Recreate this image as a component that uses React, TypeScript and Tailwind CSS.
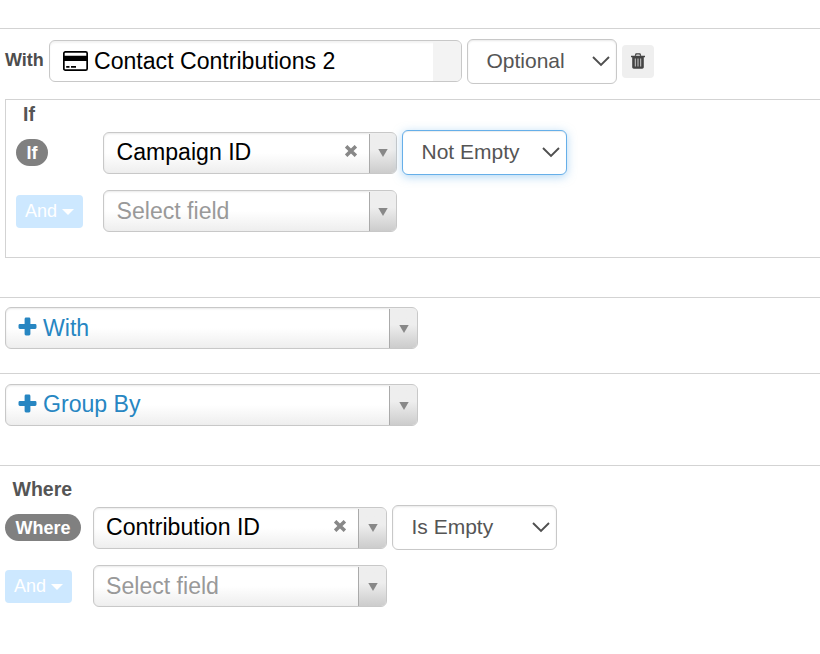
import React from "react";

function Plus() {
  return (
    <svg className="mb-[2px] mr-[6px] h-[19px] w-[19px] shrink-0" viewBox="0 0 19 19" fill="#2786c2">
      <path d="M8 0.5h3a1.4 1.4 0 0 1 1.4 1.4V7h4.7a1.4 1.4 0 0 1 1.4 1.4v2.2a1.4 1.4 0 0 1-1.4 1.4h-4.7v5.1a1.4 1.4 0 0 1-1.4 1.4H8a1.4 1.4 0 0 1-1.4-1.4V12H1.9a1.4 1.4 0 0 1-1.4-1.4V8.400a1.400 1.400 0 0 1 1.400-1.400H6.600V1.900A1.400 1.400 0 0 1 8 .5z" />
    </svg>
  );
}

function CreditCard() {
  return (
    <svg className="mr-[6px] h-[20px] w-[25px] shrink-0" viewBox="0 0 25 20" fill="none">
      <rect x="0.85" y="0.85" width="23.300" height="18.300" rx="1.500" stroke="#000" strokeWidth="1.700" />
      <path d="M1 4.800h23v5.200H1zM3.200 15h3.300v1.700H3.200zM8 15h5v1.700H8z" fill="#000" />
    </svg>
  );
}

function Clear() {
  return (
    <svg className="h-[12px] w-[12px] shrink-0" viewBox="0 0 12 12">
      <path d="M2.400 2.500l7.200 7M9.600 2.500l-7.200 7" stroke="#888" strokeWidth="3.600" strokeLinecap="square" />
    </svg>
  );
}

function Trash() {
  return (
    <svg className="mb-px h-[16px] w-[14px]" viewBox="0 0 14 16" fill="none">
      <path d="M4.300 2.800l.8-2h3.800l.8 2" stroke="#444" strokeWidth="1.300" />
      <path d="M0 2.800h14v1.500h-1.200V14c0 1-.7 1.700-1.600 1.700H2.800C1.900 15.700 1.200 15 1.200 14V4.300H0z" fill="#444" />
      <path d="M4.300 5.500v8M7 5.500v8M9.700 5.500v8" stroke="#dcdcdc" strokeWidth="0.900" />
    </svg>
  );
}

type ComboProps = {
  className: string;
  children: React.ReactNode;
  clearable?: boolean;
  arrowWidth?: string;
};

function Combo({ className, children, clearable, arrowWidth = "w-[28px]" }: ComboProps) {
  return (
    <div className={`flex h-[42px] shrink-0 overflow-hidden rounded-[6px] border border-[#c8c8c8] bg-linear-to-t from-[#eee] to-white to-50% text-[23.1px] leading-[40px] shadow-[inset_0_1px_2px_rgba(0,0,0,0.09)] ${className}`}>
      <div className="flex min-w-0 flex-1 items-center whitespace-nowrap pb-px">{children}</div>
      {clearable && <div className="mr-[12px] flex items-center pb-[4px]"><Clear /></div>}
      <div className={`mt-px flex shrink-0 items-center justify-center border-l border-[#aaa] bg-linear-to-t from-[#ccc] to-[#eee] to-60% ${arrowWidth}`}>
        <svg className="h-[8px] w-[10px]" viewBox="0 0 10 8"><path d="M.3 0h9.400L5 8z" fill="#888" /></svg>
      </div>
    </div>
  );
}

function Dropdown({ label, className, focused }: { label: string; className: string; focused?: boolean }) {
  return (
    <button className={`ml-[5px] flex h-[45px] shrink-0 items-center justify-between rounded-[6px] border bg-white pl-[18.500px] pr-[6px] text-[21px] leading-[30px] text-[#555] ${focused ? "border-[#66afe9] shadow-[inset_0_1px_1px_rgba(0,0,0,0.075),0_2px_10px_rgba(102,175,233,0.5)]" : "border-[#c8c8c8] shadow-[inset_0_1px_2px_rgba(0,0,0,0.09)]"} ${className}`}>
      <span className="whitespace-nowrap pb-[2px]">{label}</span>
      <svg className="h-[11px] w-[18px]" viewBox="0 0 18 11" fill="none"><path d="M1 1l8 8L17 1" stroke="#4f4f4f" strokeWidth="1.900" /></svg>
    </button>
  );
}

function AndButton() {
  return (
    <button className="flex h-[33px] w-[67px] shrink-0 items-center rounded-[4px] bg-[#cde8ff] pl-[9px] text-[18px] leading-[27px] text-white">
      And
      <svg className="ml-[5px] mt-px h-[6px] w-[12px]" viewBox="0 0 12 6"><path d="M0 0h12L6 6z" fill="#fff" /></svg>
    </button>
  );
}

function Badge({ children, className }: { children: string; className: string }) {
  return <span className={`flex h-[27px] shrink-0 items-center justify-center rounded-full bg-[#808080] pt-[2px] text-[18px] font-bold leading-[25px] text-white ${className}`}>{children}</span>;
}

export default function App() {
  return (
    <main className="h-[654px] w-[820px] overflow-hidden bg-white pt-[28px] font-['Liberation_Sans',Arial,sans-serif] text-[#555]">
      <section className="h-[269px] border-t border-[#d3d3d3] pl-[5px] pt-[10px]">
        <div className="flex h-[45px] items-center">
          <span className="w-[44px] shrink-0 pb-[2px] text-[18px] font-bold text-[#4d4d4d]">With</span>
          <div className="mb-px flex h-[42px] w-[413px] shrink-0 overflow-hidden rounded-[6px] border border-[#c8c8c8] text-[23.1px] leading-[40px] text-black shadow-[inset_0_2px_2px_rgba(0,0,0,0.05)]">
            <div className="flex flex-1 items-center whitespace-nowrap pl-[13px]"><CreditCard />Contact Contributions 2</div>
            <div className="mt-px w-[28px] bg-[#f3f3f3]" />
          </div>
          <Dropdown label="Optional" className="w-[150px]" />
          <button className="ml-[5px] flex h-[33px] w-[32px] items-center justify-center rounded-[4px] bg-[#efefef]"><Trash /></button>
        </div>
        <fieldset className="mt-[15px] h-[159px] border-y border-l border-[#d3d3d3] pl-[10px]">
          <h3 className="h-[30px] pl-[7px] text-[19.500px] font-bold leading-[28px]">If</h3>
          <div className="flex h-[45px] items-center">
            <Badge className="w-[32px]">If</Badge>
            <Combo className="ml-[55px] w-[294px] pl-[12.500px] text-black" arrowWidth="w-[27px]" clearable>Campaign ID</Combo>
            <Dropdown label="Not Empty" className="w-[165px]" focused />
          </div>
          <div className="mt-[15px] flex h-[42px] items-center">
            <AndButton />
            <Combo className="ml-[20px] w-[294px] pl-[12.500px] text-[#999]" arrowWidth="w-[27px]">Select field</Combo>
          </div>
        </fieldset>
      </section>
      <section className="h-[76px] border-t border-[#d3d3d3] pl-[5px] pt-[9px]">
        <Combo className="w-[413px] pl-[12px] text-[#2786c2]"><Plus />With</Combo>
      </section>
      <section className="h-[92px] border-t border-[#d3d3d3] pl-[5px] pt-[10px]">
        <Combo className="w-[413px] pl-[12px] leading-[38px] text-[#2786c2]"><Plus /><span className="pb-px">Group By</span></Combo>
      </section>
      <section className="border-t border-[#d3d3d3] pl-[5px] pt-[9px]">
        <h3 className="h-[30px] pl-[7.500px] text-[19.500px] font-bold leading-[28px]">Where</h3>
        <div className="flex h-[45px] items-center">
          <Badge className="w-[76px]">Where</Badge>
          <Combo className="ml-[12px] w-[294px] pl-[12px] text-black" clearable>Contribution ID</Combo>
          <Dropdown label="Is Empty" className="w-[165px]" />
        </div>
        <div className="mt-[15px] flex h-[42px] items-center">
          <AndButton />
          <Combo className="ml-[21px] w-[294px] pl-[12px] text-[#999]">Select field</Combo>
        </div>
      </section>
    </main>
  );
}
